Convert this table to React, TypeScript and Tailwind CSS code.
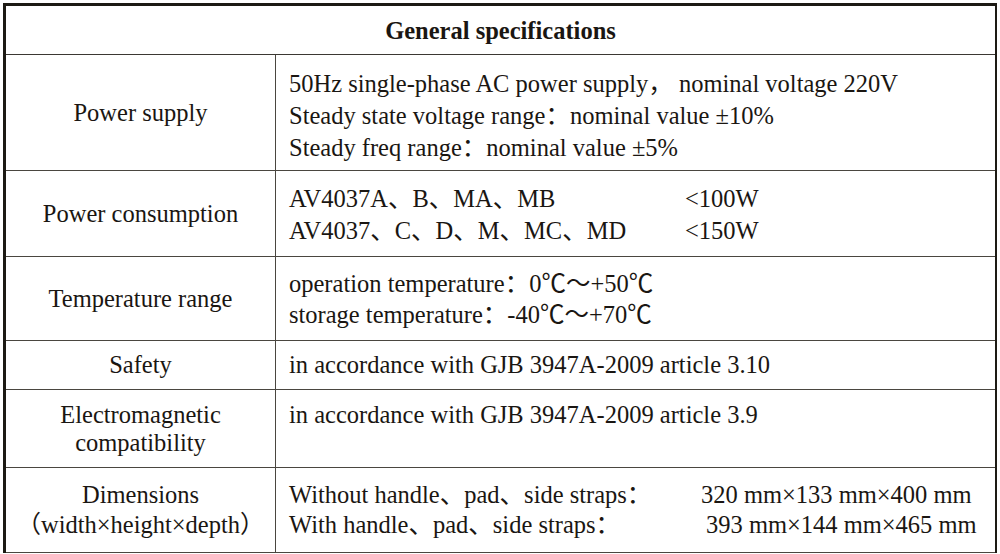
import React from 'react'

const font = { fontFamily: '"Liberation Serif", "Noto Sans CJK SC", serif' }

type Row = {
  label: React.ReactNode
  height: string
  labelLeading: string
  content: React.ReactNode
  top?: boolean
}

const rows: Row[] = [
  {
    label: 'Power supply',
    height: 'h-[115px]',
    labelLeading: 'leading-[32px]',
    content: (
      <div className="leading-[32px] pt-[6px]">
        <div>50Hz single-phase AC power supply， nominal voltage 220V</div>
        <div>Steady state voltage range：nominal value ±10%</div>
        <div>Steady freq range：nominal value ±5%</div>
      </div>
    ),
  },
  {
    label: 'Power consumption',
    height: 'h-[85px]',
    labelLeading: 'leading-[32px]',
    content: (
      <div className="leading-[32px] pt-[2px]">
        <div className="flex">
          <span className="w-[396px]">AV4037A、B、MA、MB</span>
          <span>&lt;100W</span>
        </div>
        <div className="flex">
          <span className="w-[396px]">AV4037、C、D、M、MC、MD</span>
          <span>&lt;150W</span>
        </div>
      </div>
    ),
  },
  {
    label: 'Temperature range',
    height: 'h-[83px]',
    labelLeading: 'leading-[31px]',
    content: (
      <div className="leading-[31px]">
        <div>operation temperature：0℃～+50℃</div>
        <div>storage temperature：-40℃～+70℃</div>
      </div>
    ),
  },
  {
    label: 'Safety',
    height: 'h-[48px]',
    labelLeading: 'leading-[30px]',
    content: <div className="leading-[30px]">in accordance with GJB 3947A-2009 article 3.10</div>,
  },
  {
    label: (
      <>
        <div>Electromagnetic</div>
        <div>compatibility</div>
      </>
    ),
    height: 'h-[77px]',
    labelLeading: 'leading-[28px]',
    top: true,
    content: <div className="leading-[28px]">in accordance with GJB 3947A-2009 article 3.9</div>,
  },
  {
    label: (
      <>
        <div>Dimensions</div>
        <div>（width×height×depth）</div>
      </>
    ),
    height: 'h-[84px]',
    labelLeading: 'leading-[30px]',
    content: (
      <div className="leading-[30px]">
        <div className="flex">
          <span className="w-[412px]">Without handle、pad、side straps：</span>
          <span>320 mm×133 mm×400 mm</span>
        </div>
        <div className="flex">
          <span className="w-[417px]">With handle、pad、side straps：</span>
          <span>393 mm×144 mm×465 mm</span>
        </div>
      </div>
    ),
  },
]

export default function App() {
  return (
    <div className="w-[1000px] h-[554px] bg-white overflow-hidden pt-[3px] pl-[3px] text-[#1a1612]" style={font}>
      <div className="w-[994px] border-t-[3px] border-l-[3px] border-r-2 border-[#1d1a14] text-[24.5px]">
        <div className="h-[49px] border-b border-[#3b3833] flex items-center justify-center font-bold leading-none pt-[3px]">
          General specifications
        </div>
        {rows.map((r, i) => (
          <div key={i} className={`flex border-b border-[#4a4640] ${r.height} box-content`}>
            <div className={`w-[270px] shrink-0 border-r border-[#4a4640] flex flex-col items-center justify-center text-center ${r.labelLeading}`}>
              {r.label}
            </div>
            <div className={`flex-1 pl-[13px] flex flex-col ${r.top ? 'justify-start pt-[11px]' : 'justify-center'}`}>
              {r.content}
            </div>
          </div>
        ))}
      </div>
    </div>
  )
}
